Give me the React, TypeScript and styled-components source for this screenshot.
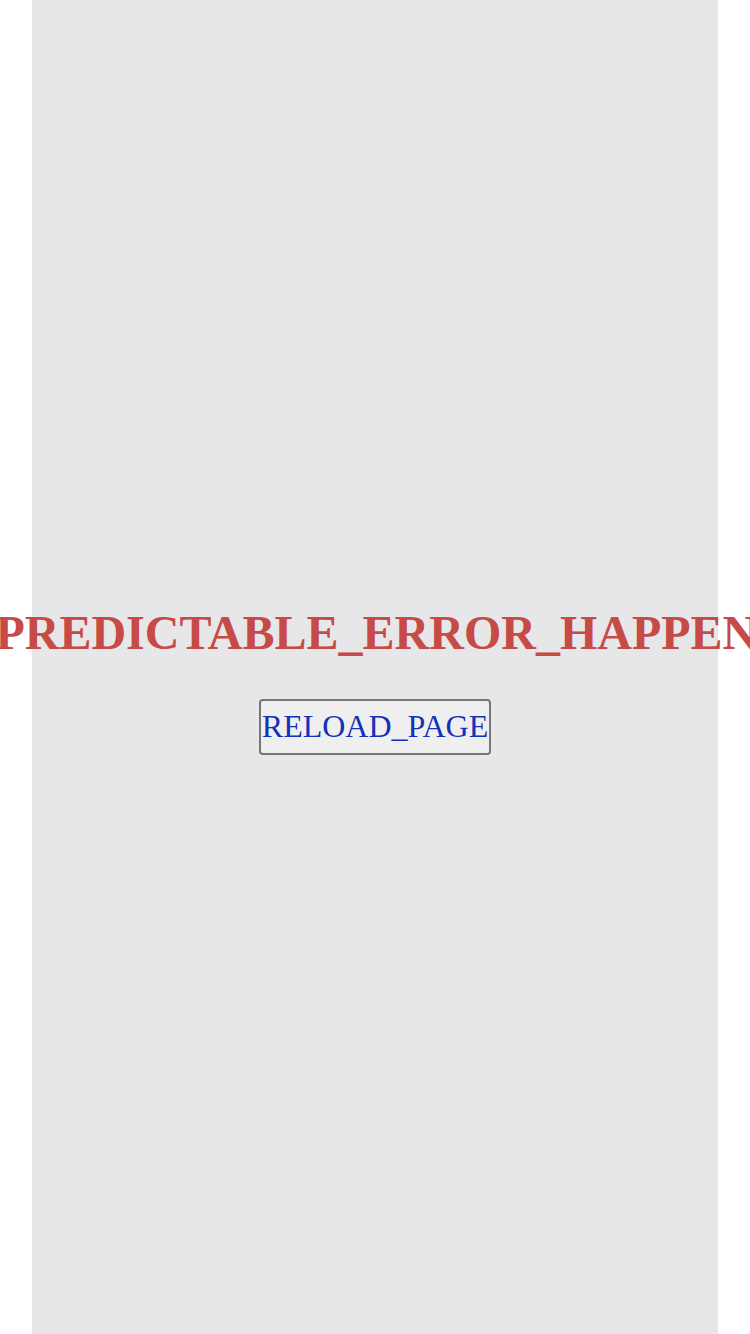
import styled, { createGlobalStyle } from "styled-components";

const GlobalStyle = createGlobalStyle`
  html, body {
    margin: 0;
    padding: 0;
    background: #ffffff;
    overflow: hidden;
  }
`;

const Page = styled.div`
  height: 1334px;
  padding: 0 32px;
  display: flex;
`;

const Column = styled.main`
  flex: 1;
  min-width: 0;
  background-color: #e7e7e9;
  display: flex;
  flex-direction: column;
  align-items: center;
  justify-content: center;
  padding-top: 25px;
`;

const Title = styled.h1`
  margin: 0 0 37px;
  font-family: "Liberation Serif", "Times New Roman", serif;
  font-size: 48px;
  font-weight: 700;
  color: #c64a45;
  white-space: nowrap;
  line-height: 1.2;
`;

const ReloadBtn = styled.button`
  font-family: "Liberation Serif", "Times New Roman", serif;
  font-size: 32px;
  color: #1432b8;
  background-color: #efefef;
  border: 2px solid #767676;
  border-radius: 4px;
  padding: 5px 1px;
  line-height: 1.3;
  cursor: pointer;
`;

function App() {
  return (
    <>
      <GlobalStyle />
      <Page>
        <Column>
          <Title>UNPREDICTABLE_ERROR_HAPPENED</Title>
          <ReloadBtn onClick={() => window.location.reload()}>RELOAD_PAGE</ReloadBtn>
        </Column>
      </Page>
    </>
  );
}

export default App;
